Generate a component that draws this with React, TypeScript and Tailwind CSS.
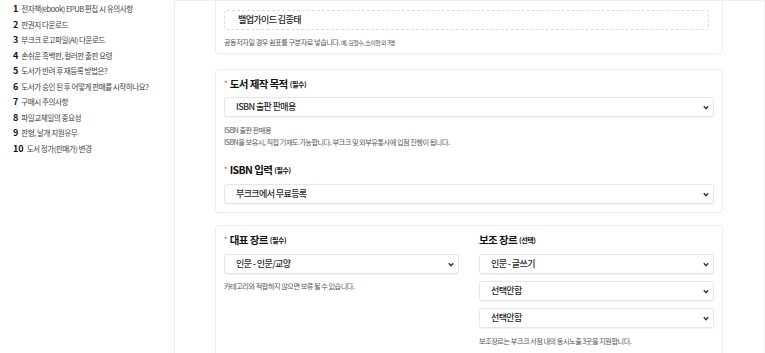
import React from "react";

const guideItems = [
  "전자책(ebook) EPUB 편집 시 유의사항",
  "판권지 다운로드",
  "부크크 로고파일(AI) 다운로드",
  "손쉬운 흑백판, 컬러판 출판 요령",
  "도서가 반려 후 재등록 방법은?",
  "도서가 승인 된 후 어떻게 판매를 시작하나요?",
  "구매시 주의사항",
  "파일교체일의 중요성",
  "판형, 날개 지원유무",
  "도서 정가(판매가) 변경",
];

const font = { fontFamily: '"Noto Sans CJK KR", "Noto Sans", sans-serif' };

function Chevron() {
  return (
    <svg width="6" height="5" viewBox="0 0 6 5" className="shrink-0">
      <path d="M0.8 1.2 L3 3.6 L5.2 1.2" fill="none" stroke="#333" strokeWidth="1.4" />
    </svg>
  );
}

function SelectBox({ value }: { value: string }) {
  return (
    <div className="flex h-[20px] items-center justify-between rounded-[3px] border border-[#e6e6e6] bg-white pl-[11px] pr-[4px] shadow-[0_1px_1px_rgba(0,0,0,0.05)]">
      <span className="text-[9px] font-medium tracking-[-0.6px] text-[#2a2a2a]">{value}</span>
      <Chevron />
    </div>
  );
}

function Label({ text, required }: { text: string; required: boolean }) {
  return (
    <div className="flex h-[12px] items-center text-[#111]">
      {required && <span className="mr-[2px] text-[8px] leading-none text-[#e5483d]">*</span>}
      <span className="text-[10.5px] font-bold tracking-[-0.6px]">{text}</span>
      <span className="ml-[2px] text-[7px] font-bold tracking-[-0.4px]">
        {required ? "(필수)" : "(선택)"}
      </span>
    </div>
  );
}

function Hint({ children }: { children: React.ReactNode }) {
  return <p className="h-[12px] text-[7.2px] leading-[12px] tracking-[-0.5px] text-[#555]">{children}</p>;
}

const cardCls =
  "rounded-[4px] border border-[#eeeeee] bg-white px-[8px] shadow-[0_1px_2px_rgba(0,0,0,0.03)]";

export default function App() {
  return (
    <div className="flex h-[353px] w-[765px] overflow-hidden bg-white" style={font}>
      <aside className="w-[175px] shrink-0 border-r border-[#efefef] pl-[13px] pt-[1px]">
        {guideItems.map((item, idx) => (
          <div key={idx} className="flex h-[15.5px] items-center whitespace-nowrap">
            <span className="mr-[3px] text-[9px] font-bold text-[#111]">{idx + 1}</span>
            <span className="text-[7.6px] tracking-[-0.5px] text-[#444]">{item}</span>
          </div>
        ))}
      </aside>

      <main className="flex-1 border-t border-[#efefef] pl-[40px] pr-[41px]">
        <div className={`${cardCls} rounded-t-none border-t-0 pt-[9px] pb-[5px]`}>
          <div className="mr-[5px] flex h-[20px] items-center rounded-[3px] border border-dashed border-[#dcdcdc] pl-[13px]">
            <span className="text-[9px] font-medium tracking-[-0.6px] text-[#222]">밸업가이드 김종태</span>
          </div>
          <div className="mt-[6px]">
            <Hint>
              공동저자일 경우 쉼표를 구분자로 넣습니다.{" "}
              <span className="text-[6px]">예, 김철수, 소이현 외 3명</span>
            </Hint>
          </div>
        </div>

        <div className={`${cardCls} mt-[15px] pt-[8px] pb-[8px]`}>
          <Label text="도서 제작 목적" required />
          <div className="mt-[7px]">
            <SelectBox value="ISBN 출판 판매용" />
          </div>
          <div className="mt-[7px]">
            <Hint>ISBN 출판 판매용</Hint>
            <Hint>ISBN을 보유시, 직접 기재도 가능합니다. 부크크 및 외부유통사에 입점 진행이 됩니다.</Hint>
          </div>
          <div className="mt-[16px]">
            <Label text="ISBN 입력" required />
          </div>
          <div className="mt-[8px]">
            <SelectBox value="부크크에서 무료등록" />
          </div>
        </div>

        <div className={`${cardCls} mt-[12px] pt-[8px] pb-[10px]`}>
          <div className="grid grid-cols-2 gap-[20px]">
            <div>
              <Label text="대표 장르" required />
              <div className="mt-[8px]">
                <SelectBox value="인문 - 인문/교양" />
              </div>
              <div className="mt-[6px]">
                <Hint>카테고리와 적합하지 않으면 보류 될 수 있습니다.</Hint>
              </div>
            </div>
            <div>
              <Label text="보조 장르" required={false} />
              <div className="mt-[8px] flex flex-col gap-[7px]">
                <SelectBox value="인문 - 글쓰기" />
                <SelectBox value="선택안함" />
                <SelectBox value="선택안함" />
              </div>
              <div className="mt-[7px]">
                <Hint>보조장르는 부크크 서점 내의 동시노출 3곳을 지원합니다.</Hint>
              </div>
            </div>
          </div>
        </div>
      </main>

      <div className="w-px shrink-0 bg-[#f2f2f2]" />
    </div>
  );
}
